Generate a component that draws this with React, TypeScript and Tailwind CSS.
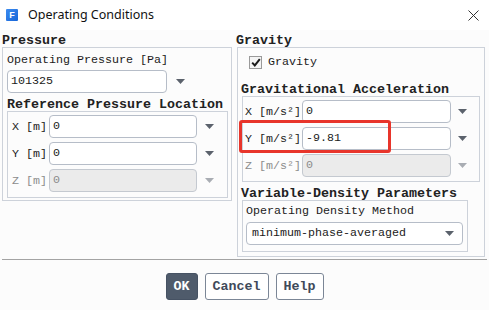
const mono = "font-['Liberation_Mono',monospace]"
const txt = "text-[11.67px] leading-[14px] text-[#1b1b1b]"
const head = "text-[13.33px] leading-[13px] font-bold text-[#222]"

function Arrow({ disabled }: { disabled?: boolean }) {
  return (
    <svg width="9" height="5" viewBox="0 0 9 5" className="shrink-0">
      <polygon points="0,0 9,0 4.5,5" fill={disabled ? '#a9adb3' : '#5b626c'} />
    </svg>
  )
}

function Field({
  label,
  value,
  disabled,
  labelW,
  inputW,
  gap,
}: {
  label: React.ReactNode
  value: string
  disabled?: boolean
  labelW: string
  inputW: string
  gap: string
}) {
  return (
    <div className="flex h-[23px] items-center">
      <div className={`${labelW} ${disabled ? 'text-[#8c8c8c]' : 'text-[#1b1b1b]'} text-[11.67px] leading-[14px]`}>
        {label}
      </div>
      <div
        className={`${inputW} flex h-[23px] items-center rounded-[4px] border pl-[3px] text-[11.67px] ${
          disabled
            ? 'border-[#c4c9d0] bg-[#ebebeb] text-[#8c8c8c]'
            : 'border-[#b6bdc8] bg-white text-[#1b1b1b]'
        }`}
      >
        {value}
      </div>
      <div className={gap}>
        <Arrow disabled={disabled} />
      </div>
    </div>
  )
}

export default function App() {
  return (
    <div className={`h-[310px] w-[489px] overflow-hidden bg-[#fcfcfc] ${mono}`}>
      {/* title bar */}
      <div className="flex h-[30px] items-center bg-white">
        <div className="ml-[6px] flex h-[12px] w-[12px] items-center justify-center rounded-[1px] bg-gradient-to-br from-[#3d8cf0] to-[#1565d8] font-['Liberation_Sans',sans-serif] text-[9px] font-bold leading-none text-white">
          F
        </div>
        <div className="ml-[10px] font-['Noto_Sans',sans-serif] text-[12.5px] leading-none text-[#111]">
          Operating Conditions
        </div>
        <svg width="11" height="11" viewBox="0 0 11 11" className="ml-auto mr-[10px]">
          <path d="M0.5 0.5 L10.5 10.5 M10.5 0.5 L0.5 10.5" stroke="#333" strokeWidth="1" />
        </svg>
      </div>

      {/* body */}
      <div className="flex pt-[4px]">
        {/* left column */}
        <div className="ml-[2px] w-[230px]">
          <div className={head}>Pressure</div>
          <div className="h-[154px] border border-[#cdd2da] pt-[5px]">
            <div className={`pl-[4px] ${txt}`}>Operating Pressure [Pa]</div>
            <div className="mt-[3px] flex items-center pl-[4px]">
              <div className="flex h-[23px] w-[160px] items-center rounded-[4px] border border-[#b6bdc8] bg-white pl-[3px] text-[11.67px] text-[#1b1b1b]">
                101325
              </div>
              <div className="ml-[9px]">
                <Arrow />
              </div>
            </div>
            <div className={`mt-[5px] pl-[4px] ${head}`}>Reference Pressure Location</div>
            <div className="ml-[4px] flex w-[221px] flex-col gap-[4px] border border-[#cdd2da] pb-[5px] pl-[4px] pt-[3px]">
              <Field label="X [m]" value="0" labelW="w-[37px]" inputW="w-[148px]" gap="ml-[8px]" />
              <Field label="Y [m]" value="0" labelW="w-[37px]" inputW="w-[148px]" gap="ml-[8px]" />
              <Field label="Z [m]" value="0" disabled labelW="w-[37px]" inputW="w-[148px]" gap="ml-[8px]" />
            </div>
          </div>
        </div>

        {/* right column */}
        <div className="ml-[5px] w-[248px]">
          <div className={`-ml-[1px] ${head}`}>Gravity</div>
          <div className="border border-[#cdd2da] pb-[4px]">
            <div className="flex items-center pl-[11px] pt-[7px]">
              <div className="flex h-[13px] w-[13px] items-center justify-center border border-[#9a9a9a] bg-[#f4f4f4]">
                <svg width="10" height="9" viewBox="0 0 10 9">
                  <path d="M1.2 4.6 L3.8 7.4 L8.8 1.2" fill="none" stroke="#1a1a1a" strokeWidth="2" />
                </svg>
              </div>
              <div className={`ml-[6px] ${txt}`}>Gravity</div>
            </div>
            <div className={`mt-[14px] pl-[3px] ${head}`}>Gravitational Acceleration</div>
            <div className="relative ml-[4px] flex w-[238px] flex-col gap-[4px] border border-[#cdd2da] pb-[4px] pl-[2px] pt-[3px]">
              <Field
                label={<>X [m/s²]</>}
                value="0"
                labelW="w-[57px]"
                inputW="w-[149px]"
                gap="ml-[7px]"
              />
              <div className="relative">
                <Field
                  label={<>Y [m/s²]</>}
                  value="-9.81"
                  labelW="w-[57px]"
                  inputW="w-[149px]"
                  gap="ml-[7px]"
                />
                <div className="absolute -left-[6px] -top-[7px] h-[33px] w-[152px] rounded-[3px] border-[3px] border-[#e8352b]" />
              </div>
              <Field
                label={<>Z [m/s²]</>}
                value="0"
                disabled
                labelW="w-[57px]"
                inputW="w-[149px]"
                gap="ml-[7px]"
              />
            </div>
            <div className={`mt-[5px] pl-[3px] ${head}`}>Variable-Density Parameters</div>
            <div className="ml-[4px] w-[226px] border border-[#cdd2da] pb-[6px] pl-[3px] pt-[3px]">
              <div className={txt}>Operating Density Method</div>
              <div className="mt-[4px] flex h-[23px] w-[217px] items-center rounded-[4px] border border-[#b6bdc8] bg-white pl-[5px] pr-[8px] text-[11.67px] text-[#1b1b1b]">
                minimum-phase-averaged
                <div className="ml-auto">
                  <Arrow />
                </div>
              </div>
            </div>
          </div>
        </div>
      </div>

      {/* separator */}
      <div className="ml-[2px] mt-[2px] h-px w-[485px] bg-[#a3a3a3]" />

      {/* buttons */}
      <div className="mt-[13px] flex justify-center gap-[7px]">
        <button className="h-[27px] w-[32px] rounded-[3px] border border-[#465263] bg-[#4f5b6b] text-[13.33px] font-bold text-white">
          OK
        </button>
        <button className="h-[27px] w-[64px] rounded-[3px] border border-[#7b8696] bg-white text-[13.33px] font-bold text-[#3f4a5a]">
          Cancel
        </button>
        <button className="h-[27px] w-[48px] rounded-[3px] border border-[#7b8696] bg-white text-[13.33px] font-bold text-[#3f4a5a]">
          Help
        </button>
      </div>
    </div>
  )
}
